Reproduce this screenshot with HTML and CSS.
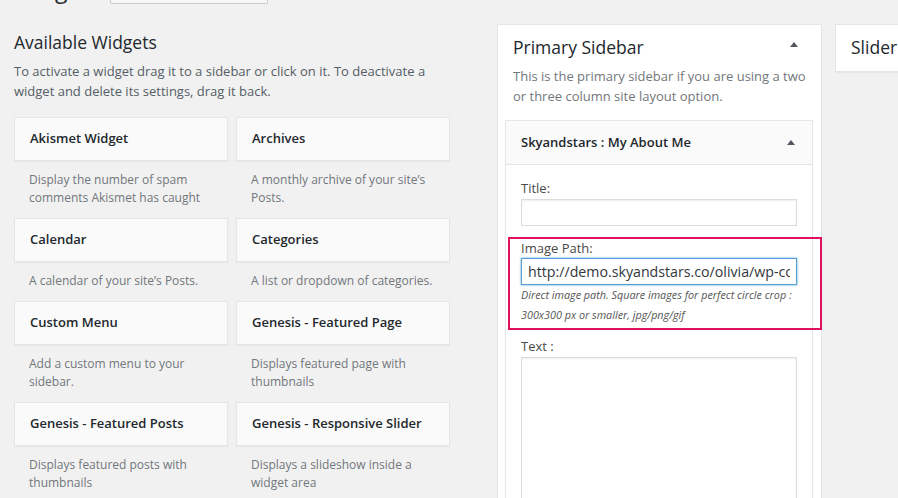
FILE: index.html
```html
<!DOCTYPE html>
<html lang="en">
<head>
<meta charset="utf-8">
<title>Widgets</title>
<link rel="stylesheet" href="styles.css">
</head>
<body>
<div class="header">
  <h1 class="page-title">Widgets</h1>
  <a class="title-action">Manage with Live Preview</a>
</div>
<div class="main">
  <div class="available">
    <h2 class="section-title">Available Widgets</h2>
    <p class="section-desc">To activate a widget drag it to a sidebar or click on it. To deactivate a widget and delete its settings, drag it back.</p>
    <div class="widget-grid">
      <div class="widget-item"><div class="widget-top">Akismet Widget</div><div class="widget-desc">Display the number of spam comments Akismet has caught</div></div>
      <div class="widget-item"><div class="widget-top">Archives</div><div class="widget-desc">A monthly archive of your site’s Posts.</div></div>
      <div class="widget-item"><div class="widget-top">Calendar</div><div class="widget-desc">A calendar of your site’s Posts.</div></div>
      <div class="widget-item"><div class="widget-top">Categories</div><div class="widget-desc">A list or dropdown of categories.</div></div>
      <div class="widget-item"><div class="widget-top">Custom Menu</div><div class="widget-desc">Add a custom menu to your sidebar.</div></div>
      <div class="widget-item"><div class="widget-top">Genesis - Featured Page</div><div class="widget-desc">Displays featured page with thumbnails</div></div>
      <div class="widget-item"><div class="widget-top">Genesis - Featured Posts</div><div class="widget-desc">Displays featured posts with thumbnails</div></div>
      <div class="widget-item"><div class="widget-top">Genesis - Responsive Slider</div><div class="widget-desc">Displays a slideshow inside a widget area</div></div>
    </div>
  </div>

  <div class="sidebar-panel primary">
    <div class="sidebar-name">
      <h2>Primary Sidebar</h2>
      <span class="toggle-arrow"></span>
    </div>
    <p class="sidebar-desc">This is the primary sidebar if you are using a two or three column site layout option.</p>
    <div class="widget-box">
      <div class="widget-head">
        <span class="widget-title">Skyandstars : My About Me</span>
        <span class="toggle-arrow small-arrow"></span>
      </div>
      <div class="widget-inside">
        <p class="field">
          <label>Title:</label>
          <input type="text" value="">
        </p>
        <p class="field">
          <label>Image Path:</label>
          <input type="text" class="focused" value="http://demo.skyandstars.co/olivia/wp-content/uploads/2015/06/about-me.jpg">
          <small>Direct image path. Square images for perfect circle crop : 300x300 px or smaller, jpg/png/gif</small>
          <span class="highlight"></span>
        </p>
        <p class="field">
          <label>Text :</label>
          <textarea></textarea>
        </p>
      </div>
    </div>
  </div>

  <div class="sidebar-panel slider">
    <div class="sidebar-name">
      <h2>Slider</h2>
    </div>
  </div>
</div>
</body>
</html>
```
FILE: styles.css
```css
html, body {
  margin: 0;
  padding: 0;
  height: 100%;
  overflow: hidden;
}

body {
  background: #f1f1f1;
  font-family: "Open Sans", "Liberation Sans", sans-serif;
  font-size: 13px;
  line-height: 1.5;
  color: #444;
}

.header {
  display: flex;
  align-items: flex-end;
  height: 30px;
  margin-top: -25px;
  padding-left: 14px;
}

.page-title {
  margin: 0;
  font-size: 23px;
  font-weight: 400;
  line-height: 29.9px;
  color: #23282d;
}

.title-action {
  display: block;
  box-sizing: border-box;
  width: 158px;
  height: 28px;
  margin: 0 0 1px 10px;
  border: 1px solid #ccc;
  border-radius: 2px;
  background: #f7f7f7;
  color: #0073aa;
  font-size: 11px;
  font-weight: 600;
  text-align: center;
  line-height: 22px;
  white-space: nowrap;
  overflow: hidden;
}

.main {
  display: flex;
  align-items: flex-start;
  margin-top: 19px;
  padding-left: 14px;
}

.available {
  flex: none;
  width: 436px;
}

.section-title {
  margin: 7px 0 8px;
  font-size: 17.5px;
  font-weight: 400;
  line-height: 23.4px;
  color: #23282d;
}

.section-desc {
  margin: 0 0 15.5px;
  color: #555d66;
}

.widget-grid {
  display: grid;
  grid-template-columns: 214px 214px;
  column-gap: 8px;
}

.widget-top {
  display: flex;
  align-items: center;
  box-sizing: border-box;
  height: 44px;
  padding: 0 15px;
  border: 1px solid #e5e5e5;
  background: #fafafa;
  box-shadow: 0 1px 1px rgba(0, 0, 0, 0.04);
  font-weight: 600;
  color: #23282d;
}

.widget-desc {
  margin: 10px 0 11px;
  padding: 0 15px;
  font-size: 12px;
  line-height: 18px;
  color: #72777c;
}

.sidebar-panel {
  flex: none;
  box-sizing: border-box;
  width: 325px;
  background: #fff;
  border: 1px solid #e5e5e5;
  box-shadow: 0 1px 1px rgba(0, 0, 0, 0.04);
}

.primary {
  margin-left: 47px;
}

.slider {
  margin-left: 13px;
}

.sidebar-name {
  display: flex;
  justify-content: space-between;
  align-items: flex-start;
  padding: 10.6px 15px 0;
}

.slider .sidebar-name {
  padding-bottom: 12px;
}

.sidebar-name h2 {
  margin: 0;
  font-size: 17.5px;
  font-weight: 400;
  line-height: 23.4px;
  color: #23282d;
}

.toggle-arrow {
  width: 0;
  height: 0;
  margin: 6px 8px 0 0;
  border-left: 4px solid transparent;
  border-right: 4px solid transparent;
  border-bottom: 5px solid #50575e;
}

.sidebar-desc {
  margin: 8px 5px 14px 15px;
  color: #72777c;
}

.widget-box {
  margin: 0 8px 0 7px;
  border: 1px solid #e5e5e5;
  background: #fff;
  box-shadow: 0 1px 1px rgba(0, 0, 0, 0.04);
}

.widget-head {
  display: flex;
  justify-content: space-between;
  align-items: center;
  box-sizing: border-box;
  height: 44px;
  padding: 0 15px;
  border-bottom: 1px solid #e5e5e5;
  background: #fafafa;
  font-weight: 600;
  color: #23282d;
}

.small-arrow {
  margin: 0 2px 0 0;
}

.widget-inside {
  padding: 1px 15px 15px;
}

.field {
  position: relative;
  margin: 13px 0;
}

.field label {
  display: block;
  color: #4a4a4a;
}

.field input {
  display: block;
  box-sizing: border-box;
  width: 100%;
  height: 27px;
  margin: 0;
  padding: 0 6px;
  border: 1px solid #ddd;
  border-radius: 0;
  box-shadow: inset 0 1px 2px rgba(0, 0, 0, 0.07);
  background: #fff;
  font-family: "Open Sans", "Liberation Sans", sans-serif;
  font-size: 14.2px;
  color: #32373c;
  outline: none;
}

.field input.focused {
  border-color: #5b9dd9;
  box-shadow: 0 0 2px rgba(30, 140, 190, 0.8);
}

.field small {
  display: block;
  font-size: 10.8px;
  font-style: italic;
  line-height: 19.5px;
  color: #555;
}

.field textarea {
  display: block;
  box-sizing: border-box;
  width: 100%;
  height: 240px;
  margin: 0;
  border: 1px solid #ddd;
  box-shadow: inset 0 1px 2px rgba(0, 0, 0, 0.07);
  resize: none;
}

.highlight {
  position: absolute;
  top: -1.5px;
  left: -13px;
  right: -25px;
  bottom: -6px;
  border: 2px solid #e0115f;
  pointer-events: none;
}
```
